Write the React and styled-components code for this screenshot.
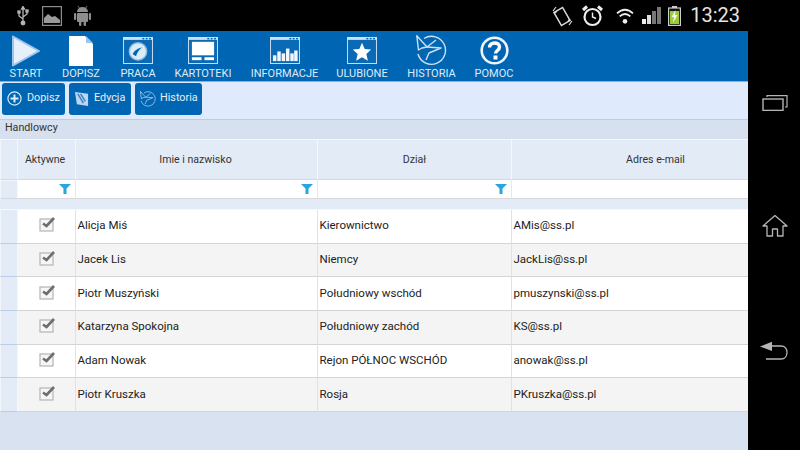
import React from "react";
import styled, { createGlobalStyle } from "styled-components";

const GlobalStyle = createGlobalStyle`
  html, body {
    margin: 0;
    padding: 0;
    background: #000;
    overflow: hidden;
  }
  * {
    box-sizing: border-box;
  }
`;

const Screen = styled.div`
  display: flex;
  width: 800px;
  height: 419px;
  font-family: Roboto, "Liberation Sans", sans-serif;
  background: #000;
`;

const Main = styled.div`
  display: flex;
  flex-direction: column;
  width: 748px;
  height: 419px;
  overflow: hidden;
`;

const NavBar = styled.div`
  display: flex;
  flex-direction: column;
  align-items: center;
  justify-content: space-between;
  width: 52px;
  padding: 64px 0 89px 1px;
`;

const StatusBar = styled.div`
  display: flex;
  align-items: center;
  justify-content: space-between;
  width: 800px;
  height: 31px;
  padding: 0 60px 0 17px;
  background: #000;
  font-family: Roboto, "Liberation Sans", sans-serif;
`;

const StatusGroup = styled.div`
  display: flex;
  align-items: center;
`;

const StatusSlot = styled.div`
  display: flex;
  align-items: center;
  margin-left: ${(props) => props.$left || 0}px;
`;

const Clock = styled.span`
  margin-left: 9px;
  color: #e4e4e4;
  font-size: 20px;
  line-height: 31px;
`;

const Toolbar = styled.div`
  display: flex;
  height: 51px;
  flex: none;
  background: #0066b3;
  border-bottom: 1px solid #7fb0e0;
`;

const ToolItem = styled.div`
  width: ${(props) => props.$width}px;
  flex: none;
  display: flex;
  flex-direction: column;
  align-items: center;
  height: 50px;
  padding-top: 4px;
  color: #dfeaf6;
`;

const ToolIconBox = styled.div`
  display: flex;
  align-items: center;
  justify-content: center;
  height: 31px;
`;

const ToolLabel = styled.span`
  margin-top: 1px;
  font-size: 11px;
  line-height: 13px;
  white-space: nowrap;
`;

const SubBar = styled.div`
  display: flex;
  flex: none;
  gap: 4px;
  height: 38px;
  padding: 1px 0 0 2px;
  background: #dfebfc;
  border-bottom: 1px solid #b9cde6;
`;

const SubButton = styled.div`
  display: flex;
  align-items: center;
  gap: ${(props) => props.$gap || 5}px;
  width: ${(props) => props.$width}px;
  height: 32px;
  padding: 0 0 1px ${(props) => props.$pad || 5}px;
  background: #0066b3;
  border-radius: 3px;
  color: #e6eff8;
`;

const SubText = styled.span`
  margin-bottom: 3px;
  font-size: 10.8px;
`;

const TitleBar = styled.div`
  flex: none;
  height: 19px;
  padding-left: 5px;
  background: #d6e0ef;
  color: #333;
  font-size: 10.7px;
  line-height: 16px;
`;

const Content = styled.div`
  flex: 1;
  background: #d8e2f0;
`;

const Row = styled.div`
  display: grid;
  grid-template-columns: 18px 58px 242px 194px 288px;
  height: ${(props) => props.$height}px;
`;

const HeadCell = styled.div`
  display: flex;
  align-items: center;
  justify-content: center;
  padding: 0 ${(props) => props.$right || 0}px 1px 0;
  background: #e3ebf7;
  border-top: 1px solid #f4f7fc;
  border-right: 1px solid #f4f7fc;
  border-bottom: 1px solid #cdd9ea;
  color: #333;
  font-size: 10.6px;
`;

const SideHead = styled(HeadCell)`
  border-left: 1px solid #f2f6fb;
`;

const FilterCell = styled.div`
  display: flex;
  align-items: center;
  justify-content: flex-end;
  padding-right: 4px;
  background: #fff;
  border-right: 1px solid #e4e8ee;
  border-bottom: 1px solid #d8d8d8;
`;

const SideCell = styled.div`
  background: #e3ebf7;
  border-right: 1px solid #f4f7fc;
  border-bottom: 1px solid #b9cde6;
  border-left: 1px solid #f2f6fb;
`;

const Spacer = styled.div`
  height: 11px;
  background: #e3ebf7;
  border-bottom: 1px solid #f4f7fc;
`;

const DataCell = styled.div`
  display: flex;
  align-items: center;
  justify-content: ${(props) => (props.$center ? "center" : "flex-start")};
  padding: ${(props) => (props.$center ? "0 0 4px 1px" : "0 0 2px 1.5px")};
  background: ${(props) => (props.$alt ? "#f4f4f4" : "#fff")};
  border-right: 1px solid #e2e2e2;
  border-bottom: 1px solid #d4d4d4;
  color: #222;
  font-size: 11.5px;
  white-space: nowrap;
  overflow: hidden;
`;

const Play = () => (
  <svg width="30" height="32" viewBox="0 0 30 32">
    <path d="M2 1.5 L28 16 L2 30.5 Z" fill="#e6effa" stroke="#9cc4ec" strokeWidth="2" strokeLinejoin="round" />
  </svg>
);

const Doc = () => (
  <svg width="24" height="31" viewBox="0 0 24 31">
    <path d="M0 1 H16 L24 9 V31 H0 Z" fill="#fff" />
    <path d="M17 1 L24 8 H17 Z" fill="#9cc4ec" />
  </svg>
);

const Win = ({ children }) => (
  <svg width="30" height="27" viewBox="0 0 31 28">
    <rect x="0.5" y="0.5" width="30" height="27" fill="#0a6ab6" stroke="#cfe0f2" />
    <rect x="0" y="0" width="31" height="3" fill="#cfe0f2" />
    <rect x="20" y="1" width="2" height="1.5" fill="#0066b3" />
    <rect x="23.5" y="1" width="2" height="1.5" fill="#0066b3" />
    <rect x="27" y="1" width="2" height="1.5" fill="#0066b3" />
    {children}
  </svg>
);

const Gauge = () => (
  <Win>
    <circle cx="15.5" cy="15" r="9" fill="#dcebf8" stroke="#8fbbe3" strokeWidth="1.5" />
    <path d="M10 18 Q11 13 20 10.5 Q15 14 13.5 20 Z" fill="#0066b3" />
  </Win>
);

const Cards = () => (
  <Win>
    <rect x="4" y="5" width="23" height="14" fill="#fff" />
    <rect x="4" y="21" width="10" height="3" fill="#fff" />
    <rect x="17" y="21" width="10" height="3" fill="#fff" />
  </Win>
);

const Bars = () => (
  <Win>
    {[[3, 6], [7.5, 10], [12, 8], [16.5, 13], [21, 8], [25, 11]].map(([x, h]) => (
      <rect key={x} x={x} y={25 - h} width="3.6" height={h} fill="#f0f6fc" />
    ))}
  </Win>
);

const Star = () => (
  <Win>
    <path d="M15.5 6 L18.3 12.4 L25 13 L20 17.6 L21.6 24.5 L15.5 20.9 L9.4 24.5 L11 17.6 L6 13 L12.7 12.4 Z" fill="#fff" />
  </Win>
);

const HistoryIcon = ({ size = 31, color = "#cfe0f2" }) => (
  <svg width={size} height={size} viewBox="0 0 31 31" fill="none" stroke={color} strokeWidth="1.4">
    <path d="M8 3.5 A14 14 0 1 1 2 19" />
    <path d="M0.8 0.8 L11 12 L6 13 L2.5 15 Z" strokeLinejoin="round" />
    <path d="M20 5 L11 12 L25 13 L13 18 L10 25" strokeLinejoin="round" />
  </svg>
);

const Help = () => (
  <svg width="29" height="29" viewBox="0 0 29 29">
    <circle cx="14.5" cy="14.5" r="12.8" fill="#0066b3" stroke="#eef4fb" strokeWidth="2.6" />
    <path d="M9.5 11.5 C9.5 5.5 19.5 5.5 19.5 11 C19.5 14.5 15.5 14.5 15.5 17.5" fill="none" stroke="#fff" strokeWidth="3.4" />
    <rect x="13.5" y="19.5" width="4" height="4" fill="#fff" />
  </svg>
);

const PlusCircle = () => (
  <svg width="15" height="15" viewBox="0 0 15 15" fill="none" stroke="#dcebf8">
    <circle cx="7.5" cy="7.5" r="6.6" strokeWidth="1.2" />
    <path d="M7.5 3.5 V11.5 M3.5 7.5 H11.5" strokeWidth="2" />
  </svg>
);

const EditIcon = () => (
  <svg width="14" height="16" viewBox="0 0 15 17">
    <path d="M0 1 L14 3 V16 L2 14 Z" fill="#bcd6ef" />
    <path d="M3 3 L9 13 M6 3 L11 11" stroke="#3c82c4" strokeWidth="1.6" />
  </svg>
);

const Funnel = () => (
  <svg width="12" height="10" viewBox="0 0 12 10">
    <path d="M0 0 H12 L7.5 4.5 V10 H4.5 V4.5 Z" fill="#29a5e0" />
  </svg>
);

const Checked = () => (
  <svg width="17" height="16" viewBox="0 0 17 16" fill="none">
    <rect x="1" y="3" width="13" height="12" fill="#f6f6f6" stroke="#b4b4b4" strokeWidth="1.2" />
    <path d="M4 7.5 L7.5 10 L15 2" stroke="#6e6e6e" strokeWidth="2.6" />
  </svg>
);

const Usb = () => (
  <svg width="12" height="20" viewBox="0 0 12 20" fill="none" stroke="#b5b5b5" strokeWidth="1.3">
    <path d="M6 1 V17 M6 13 L2 10 V7 M6 11 L10 8 V6" />
    <circle cx="6" cy="17" r="1.8" fill="#b5b5b5" />
    <path d="M4.5 3 L6 0.5 L7.5 3 Z" fill="#b5b5b5" />
    <rect x="1" y="5" width="2" height="2" fill="#b5b5b5" />
    <rect x="9" y="4" width="2" height="2" fill="#b5b5b5" />
  </svg>
);

const ImageIcon = () => (
  <svg width="20" height="20" viewBox="0 0 20 20">
    <rect x="0.6" y="0.6" width="18.8" height="18.8" fill="none" stroke="#8c8c8c" strokeWidth="1.2" />
    <path d="M2 17 V12 L6 8 L10 11 L13 10 L18 14 V17 Z" fill="#9a9a9a" />
  </svg>
);

const Android = () => (
  <svg width="17" height="20" viewBox="0 0 17 20" fill="#8e8e8e">
    <path d="M3 6 A5.5 5 0 0 1 14 6 Z" />
    <rect x="3" y="7" width="11" height="9" rx="1" />
    <rect x="0" y="7" width="2.2" height="7" rx="1" />
    <rect x="14.8" y="7" width="2.2" height="7" rx="1" />
    <rect x="5" y="15" width="2.4" height="5" rx="1" />
    <rect x="9.6" y="15" width="2.4" height="5" rx="1" />
    <path d="M4 0 L6 3 M13 0 L11 3" stroke="#8e8e8e" strokeWidth="0.8" />
  </svg>
);

const Rotate = () => (
  <svg width="21" height="22" viewBox="0 0 21 22" fill="none" stroke="#d8d8d8">
    <rect x="5" y="4" width="10" height="15" transform="rotate(-30 10 11.5)" strokeWidth="1.5" />
    <path d="M1 6 L4 2 M3 8 L5 6 M20 16 L17 20 M18 14 L16 16" strokeWidth="1.2" />
  </svg>
);

const Alarm = () => (
  <svg width="21" height="22" viewBox="0 0 21 22" fill="none" stroke="#eee">
    <circle cx="10.5" cy="12" r="8" strokeWidth="2.2" />
    <path d="M10.5 7.5 V12 L14 13.5" strokeWidth="1.4" />
    <path d="M1 5 L5 1.5 M20 5 L16 1.5" strokeWidth="3" />
  </svg>
);

const Wifi = () => (
  <svg width="18" height="16" viewBox="0 0 20 18" fill="none" stroke="#eee" strokeWidth="2">
    <path d="M1 6 Q10 -2 19 6" />
    <path d="M4 9.5 Q10 4 16 9.5" />
    <circle cx="10" cy="15" r="2.6" fill="#eee" stroke="none" />
  </svg>
);

const Signal = () => (
  <svg width="20" height="18" viewBox="0 0 20 18">
    <rect x="0" y="12" width="4" height="5" fill="#eee" />
    <rect x="5" y="8" width="4" height="9" fill="#ddd" />
    <rect x="10" y="4" width="4" height="13" fill="#777" />
    <rect x="15" y="0" width="4" height="17" fill="#777" />
  </svg>
);

const Battery = () => (
  <svg width="13" height="20" viewBox="0 0 13 20">
    <rect x="4" y="0" width="5" height="2" fill="#ccc" />
    <rect x="0.6" y="2" width="11.8" height="17.4" fill="#111" stroke="#ccc" strokeWidth="1.2" />
    <rect x="2" y="5" width="9" height="13" fill="#9acd32" />
    <path d="M7.5 4 L3.5 11 H6 L5 17 L9.5 9 H7 Z" fill="#f4f4f4" />
  </svg>
);

const Recents = () => (
  <svg width="26" height="16" viewBox="0 1 26 16" fill="none" stroke="#b5b5b5" strokeWidth="1.2">
    <rect x="1" y="5" width="20" height="11.4" strokeWidth="1.4" />
    <path d="M5 3 V1.6 H25 V13 H23" />
  </svg>
);

const Home = () => (
  <svg width="26" height="23" viewBox="0 1 26 23" fill="none" stroke="#b5b5b5" strokeWidth="1.3">
    <path d="M1 12 L13 1.5 L25 12 H21 V22 H15.5 V15 H10.5 V22 H5 V12 Z" strokeLinejoin="round" />
  </svg>
);

const Back = () => (
  <svg width="29" height="20" viewBox="0 0 29 20" fill="none" stroke="#b5b5b5" strokeWidth="1.3">
    <path d="M0 5.5 L12 0.8 V10 Z" fill="#b5b5b5" stroke="none" />
    <path d="M10 5 H21 C29 5 29 18 21 18 H6" />
  </svg>
);

const tools = [
  { label: "START", width: 52, icon: <Play /> },
  { label: "DOPISZ", width: 58, icon: <Doc /> },
  { label: "PRACA", width: 56, icon: <Gauge /> },
  { label: "KARTOTEKI", width: 74, icon: <Cards /> },
  { label: "INFORMACJE", width: 89, icon: <Bars /> },
  { label: "ULUBIONE", width: 66, icon: <Star /> },
  { label: "HISTORIA", width: 73, icon: <HistoryIcon /> },
  { label: "POMOC", width: 52, icon: <Help /> },
];

const people = [
  ["Alicja Miś", "Kierownictwo", "AMis@ss.pl"],
  ["Jacek Lis", "Niemcy", "JackLis@ss.pl"],
  ["Piotr Muszyński", "Południowy wschód", "pmuszynski@ss.pl"],
  ["Katarzyna Spokojna", "Południowy zachód", "KS@ss.pl"],
  ["Adam Nowak", "Rejon PÓŁNOC WSCHÓD", "anowak@ss.pl"],
  ["Piotr Kruszka", "Rosja", "PKruszka@ss.pl"],
];

export default function App() {
  return (
    <>
      <GlobalStyle />
      <StatusBar>
        <StatusGroup>
          <StatusSlot><Usb /></StatusSlot>
          <StatusSlot $left={13}><ImageIcon /></StatusSlot>
          <StatusSlot $left={12}><Android /></StatusSlot>
        </StatusGroup>
        <StatusGroup>
          <StatusSlot><Rotate /></StatusSlot>
          <StatusSlot $left={9}><Alarm /></StatusSlot>
          <StatusSlot $left={13}><Wifi /></StatusSlot>
          <StatusSlot $left={8}><Signal /></StatusSlot>
          <StatusSlot $left={6}><Battery /></StatusSlot>
          <Clock>13:23</Clock>
        </StatusGroup>
      </StatusBar>
      <Screen>
        <Main>
          <Toolbar>
            {tools.map((t) => (
              <ToolItem key={t.label} $width={t.width}>
                <ToolIconBox>{t.icon}</ToolIconBox>
                <ToolLabel>{t.label}</ToolLabel>
              </ToolItem>
            ))}
          </Toolbar>
          <SubBar>
            <SubButton $width={63}>
              <PlusCircle />
              <SubText>Dopisz</SubText>
            </SubButton>
            <SubButton $width={62} $gap={5} $pad={6}>
              <EditIcon />
              <SubText>Edycja</SubText>
            </SubButton>
            <SubButton $width={67} $gap={4}>
              <HistoryIcon size={16} color="#bcd6ef" />
              <SubText>Historia</SubText>
            </SubButton>
          </SubBar>
          <TitleBar>Handlowcy</TitleBar>
          <Content>
            <Row $height={41}>
              <SideHead />
              <HeadCell $right={3}>Aktywne</HeadCell>
              <HeadCell $right={2}>Imie i nazwisko</HeadCell>
              <HeadCell>Dział</HeadCell>
              <HeadCell>Adres e-mail</HeadCell>
            </Row>
            <Row $height={19}>
              <SideHead />
              <FilterCell><Funnel /></FilterCell>
              <FilterCell><Funnel /></FilterCell>
              <FilterCell><Funnel /></FilterCell>
              <FilterCell />
            </Row>
            <Spacer />
            {people.map(([name, dept, mail], i) => (
              <Row key={name} $height={33.7}>
                <SideCell />
                <DataCell $center $alt={i % 2 === 1}><Checked /></DataCell>
                <DataCell $alt={i % 2 === 1}>{name}</DataCell>
                <DataCell $alt={i % 2 === 1}>{dept}</DataCell>
                <DataCell $alt={i % 2 === 1}>{mail}</DataCell>
              </Row>
            ))}
          </Content>
        </Main>
        <NavBar>
          <Recents />
          <Home />
          <Back />
        </NavBar>
      </Screen>
    </>
  );
}
